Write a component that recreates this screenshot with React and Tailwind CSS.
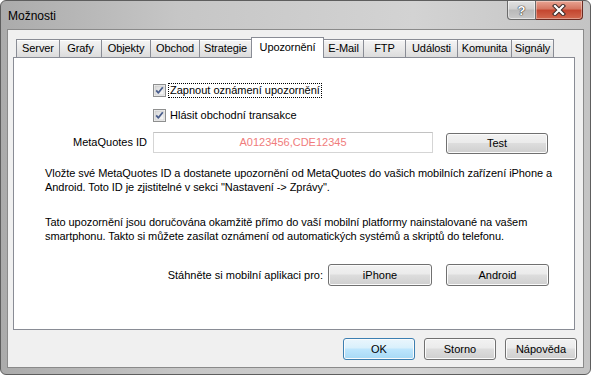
import React from "react";

const tabs = [
  { label: "Server", w: "w-[44px]" },
  { label: "Grafy", w: "w-[43px]" },
  { label: "Objekty", w: "w-[50px]" },
  { label: "Obchod", w: "w-[50px]" },
  { label: "Strategie", w: "w-[53px]" },
  { label: "Upozornění", w: "w-[73px]", active: true },
  { label: "E-Mail", w: "w-[41px]" },
  { label: "FTP", w: "w-[43px]" },
  { label: "Události", w: "w-[53px]" },
  { label: "Komunita", w: "w-[55px]" },
  { label: "Signály", w: "w-[43px]" },
];

function Btn({ children, className, primary }) {
  const look = primary
    ? "border-[#3c7fb1] bg-[linear-gradient(#eaf6fd,#d9f0fc_45%,#bee6fd_50%,#a7d9f5)]"
    : "border-[#707070] bg-[linear-gradient(#f2f2f2,#ebebeb_45%,#dddddd_50%,#cfcfcf)]";
  return (
    <div
      className={
        "flex items-center justify-center rounded-[3px] border shadow-[inset_0_0_0_1px_#fbfbfb] leading-[13px] " +
        look +
        " " +
        className
      }
    >
      {children}
    </div>
  );
}

function Check() {
  return (
    <svg width="13" height="13" viewBox="0 0 13 13" className="shrink-0">
      <defs>
        <linearGradient id="cbg" x1="0" y1="0" x2="1" y2="1">
          <stop offset="0" stopColor="#d6d6d6" />
          <stop offset="1" stopColor="#fbfbfb" />
        </linearGradient>
      </defs>
      <rect x="0.5" y="0.5" width="12" height="12" fill="#f4f4f4" stroke="#8e8f8f" />
      <rect x="2" y="2" width="9" height="9" fill="url(#cbg)" stroke="#c4c4c4" strokeWidth="0.6" />
      <path d="M3.2 6.4 L5.4 8.8 L9.8 3.2" fill="none" stroke="#4a5e8c" strokeWidth="1.8" strokeLinejoin="round" />
    </svg>
  );
}

export default function App() {
  return (
    <div className="w-[591px] h-[375px] bg-white font-['Liberation_Sans',Arial,sans-serif] text-[11px] text-black">
      <div className="flex h-full w-full flex-col overflow-hidden rounded-[6px] border border-[#5e5e5e] bg-[linear-gradient(90deg,#ababab,#c6c6c6_30%,#d3d3d3_70%,#c4c4c4)]">
        {/* title bar */}
        <div className="flex h-[28px] shrink-0 items-start justify-between">
          <div className="pl-[7px] pt-[8px] text-[12px] leading-[14px] text-black">Možnosti</div>
          <div className="mr-[7px] flex">
            <div className="flex h-[19px] w-[29px] items-center justify-center rounded-bl-[4px] border border-t-0 border-[#6a6a6a] bg-[linear-gradient(#e2e2e2,#cfcfcf_45%,#b9b9b9_50%,#c9c9c9)] shadow-[inset_0_0_0_1px_rgba(255,255,255,0.5)]">
              <span className="text-[13px] font-bold leading-none text-white [text-shadow:0_0_1px_#333,0_0_1px_#333,0_0_1px_#333]">?</span>
            </div>
            <div className="flex h-[19px] w-[47px] items-center justify-center rounded-br-[4px] border border-l-0 border-t-0 border-[#6b2b22] bg-[linear-gradient(#e8a493,#d47560_45%,#c4452f_50%,#d2694f)] shadow-[inset_0_0_0_1px_rgba(255,255,255,0.35)]">
              <svg width="14" height="12" viewBox="0 0 14 12">
                <path d="M3 2 L11 10 M11 2 L3 10" stroke="#3a2a28" strokeWidth="4.2" strokeLinecap="square" />
                <path d="M3 2 L11 10 M11 2 L3 10" stroke="#ffffff" strokeWidth="2.2" strokeLinecap="square" />
              </svg>
            </div>
          </div>
        </div>

        {/* client area */}
        <div className="mx-[6px] mb-[6px] flex flex-1 flex-col border border-[#8a8a8a] bg-[#f0f0f0]">
          <div className="flex flex-col pl-[5px] pr-[8px] pt-[7px]">
            {/* tabs */}
            <div className="relative z-10 ml-[3px] flex h-[20px] items-end tracking-[-0.1px]">
              {tabs.map((t, i) =>
                t.active ? (
                  <div
                    key={t.label}
                    className={
                      "-mb-px -ml-px flex h-[21px] items-center justify-center border border-b-0 border-[#898c95] bg-white pb-[2px] leading-[13px] " +
                      t.w
                    }
                  >
                    {t.label}
                  </div>
                ) : (
                  <div
                    key={t.label}
                    className={
                      "flex h-[18px] items-center justify-center border border-b-0 border-[#898c95] bg-[linear-gradient(#f5f5f5,#e9e9e9_50%,#dcdcdc)] leading-[13px] shadow-[inset_0_1px_0_#ffffff] " +
                      (i === 0 ? "" : "-ml-px ") +
                      t.w
                    }
                  >
                    {t.label}
                  </div>
                )
              )}
            </div>

            {/* panel */}
            <div className="flex h-[273px] flex-col border border-[#898c95] bg-white">
              <div className="ml-[139px] mt-[25px] flex items-center">
                <Check />
                <span className="ml-[2px] border border-dotted border-black px-px leading-[13px]">
                  Zapnout oznámení upozornění
                </span>
              </div>
              <div className="ml-[139px] mt-[10px] flex items-center">
                <Check />
                <span className="ml-[2px] border border-transparent px-px leading-[13px]">
                  Hlásit obchodní transakce
                </span>
              </div>

              <div className="mt-[9px] flex items-start">
                <div className="flex h-[21px] w-[133px] items-center justify-end leading-[13px]">MetaQuotes ID</div>
                <div className="ml-[6px] flex h-[21px] w-[280px] items-center justify-center border border-[#d5d5d5] border-t-[#c2c2c2] leading-[13px] text-[#f07c7c]">
                  A0123456,CDE12345
                </div>
                <Btn className="ml-[13px] mt-px h-[21px] w-[102px]">Test</Btn>
              </div>

              <p className="ml-[31px] mt-[12px] whitespace-nowrap leading-[14px] tracking-[-0.06px]">
                Vložte své MetaQuotes ID a dostanete upozornění od MetaQuotes do vašich mobilních zařízení iPhone a
                <br />
                Android. Toto ID je zjistitelné v sekci "Nastavení -&gt; Zprávy".
              </p>

              <p className="ml-[31px] mt-[21px] whitespace-nowrap leading-[14px] tracking-[-0.06px]">
                Tato upozornění jsou doručována okamžitě přímo do vaší mobilní platformy nainstalované na vašem
                <br />
                smartphonu. Takto si můžete zasílat oznámení od automatických systémů a skriptů do telefonu.
              </p>

              <div className="mt-[21px] flex items-center">
                <div className="w-[309px] text-right leading-[13px]">Stáhněte si mobilní aplikaci pro:</div>
                <Btn className="ml-[5px] h-[22px] w-[104px]">iPhone</Btn>
                <Btn className="ml-[14px] h-[22px] w-[103px]">Android</Btn>
              </div>
            </div>
          </div>

          {/* bottom buttons */}
          <div className="mr-[6px] mt-[8px] flex justify-end gap-[9px]">
            <Btn primary className="h-[22px] w-[72px]">OK</Btn>
            <Btn className="h-[22px] w-[72px]">Storno</Btn>
            <Btn className="h-[22px] w-[72px]">Nápověda</Btn>
          </div>
        </div>
      </div>
    </div>
  );
}
